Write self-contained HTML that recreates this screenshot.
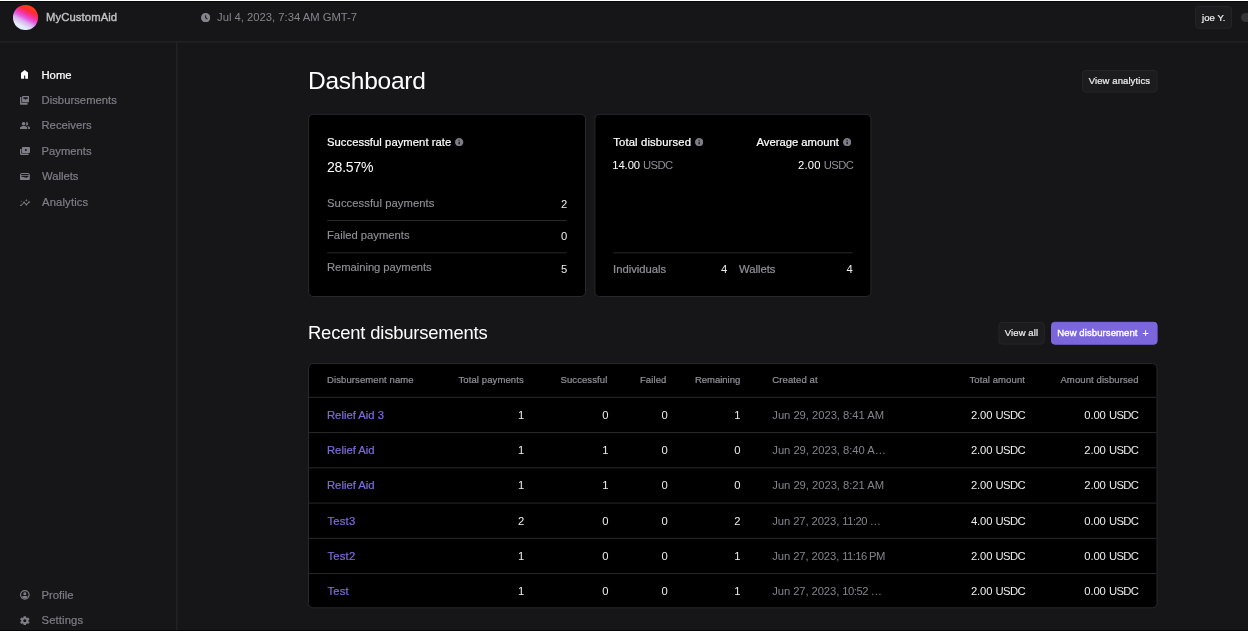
<!DOCTYPE html>
<html lang="en">
<head>
<meta charset="utf-8">
<title>Dashboard - Stellar Disbursement Platform</title>
<style>
*{box-sizing:border-box;margin:0;padding:0}
html,body{width:1248px;height:632px;overflow:hidden;background:#161618}
body{font-family:"Liberation Sans",Arial,sans-serif;color:#ededef;font-size:11.25px}
#app{position:absolute;left:0;top:0;width:1248px;height:632px;background:#161618;overflow:hidden;will-change:transform}
#topl{position:absolute;left:0;top:0;width:1248px;height:2px;background:linear-gradient(#fff 0,#fff 50%,#070709 50%,#070709 100%);z-index:5}
#botl{position:absolute;left:0;top:630px;width:1248px;height:2px;background:linear-gradient(#070709 0,#070709 50%,#fff 50%,#fff 100%);z-index:5}
.abs{position:absolute}
.t{position:absolute;white-space:nowrap;line-height:16px;height:16px}
.med{-webkit-text-stroke:0.22px currentColor}
.lt{-webkit-text-stroke:0.15px currentColor}
.semi{-webkit-text-stroke:0.38px currentColor}
.n{letter-spacing:-.1px}
.u{letter-spacing:-.6px}
.w{color:#fff}
.g9{color:#7e7d86}
.g9d{color:#84838b}
.g11{color:#908f97}
.lnk{color:#7e6add}
.line{position:absolute;background:#2a2a2e}
.ico{position:absolute}
.btn{position:absolute;border:1px solid #26262a;border-radius:3.5px;background:#1c1c1f}
.btn.pri{background:#7c66dc;border-color:#7c66dc}
.card{position:absolute;background:#000;border:1px solid #2a2a2e;border-radius:5px}
h1,h2{position:absolute;font-weight:400;color:#fff;white-space:nowrap;margin:0}
</style>
</head>
<body>
<div id="app">
<div id="topl"></div><div id="botl"></div>
<!-- header -->
<svg class="abs" style="left:0;top:0" width="1248" height="632" viewBox="0 0 1248 632" fill="none" stroke-width="1">
<path d="M0 41.9H1248" stroke="#29292d"/>
<path d="M176.8 42V632" stroke="#29292d"/>
<rect x="1195.6" y="6.5" width="36.0" height="21.8" rx="3.2" fill="#1c1c1f" stroke="#252529"/>
<rect x="1082.5" y="70.5" width="74.6" height="21.5" rx="3.2" fill="#1c1c1f" stroke="#252529"/>
<rect x="308.6" y="114.3" width="276.9" height="182.2" rx="4.6" fill="#000" stroke="#29292d"/>
<path d="M327.2 220.5H566.8" stroke="#29292d"/>
<path d="M327.2 252.8H566.8" stroke="#29292d"/>
<rect x="594.9" y="114.3" width="276.0" height="182.2" rx="4.6" fill="#000" stroke="#29292d"/>
<path d="M613.2 252.8H852.6" stroke="#29292d"/>
<rect x="998.9" y="322.5" width="45.4" height="21.6" rx="3.2" fill="#1c1c1f" stroke="#252529"/>
<rect x="1051.5" y="322.3" width="105.6" height="21.9" rx="3.2" fill="#7c66dc" stroke="#7c66dc"/>
<rect x="308.5" y="363.6" width="848.5" height="244.2" rx="4.6" fill="#000" stroke="#29292d"/>
<path d="M309 397.3H1156.5" stroke="#29292d"/>
<path d="M309 432.56H1156.5" stroke="#29292d"/>
<path d="M309 467.82H1156.5" stroke="#29292d"/>
<path d="M309 503.08H1156.5" stroke="#29292d"/>
<path d="M309 538.34H1156.5" stroke="#29292d"/>
<path d="M309 573.6H1156.5" stroke="#29292d"/>
</svg>
<div class="abs" style="left:13.1px;top:5.2px;width:24.5px;height:24.5px;border-radius:50%;background:linear-gradient(208deg,#ff4a00 10%,#ff2a38 28%,#f436a8 42%,#e45ae0 51%,#dcaef0 62%,#e4eef8 78%)"></div>
<div class="t semi" style="left:46px;top:9.1px;letter-spacing:0.11px;color:#c2c1c6">MyCustomAid</div>
<svg class="abs" style="left:201.2px;top:12.7px;width:9.300px;height:9.300px" viewBox="0 0 24 24"><circle cx="12" cy="12" r="12" fill="#85848c"/><path d="M12 5.500V12.500l4.500 3" stroke="#161618" stroke-width="2.600" fill="none"/></svg>
<div class="t " style="left:217px;top:9.1px;color:#85848c">Jul 4, 2023, 7:34 AM GMT-7</div>
<div class="t med" style="left:1202px;top:9.71px;font-size:9.5px;letter-spacing:0.1px;color:#ededef">joe Y.</div>
<div class="abs" style="left:1241px;top:13px;width:20px;height:9.200px;border-radius:5px;background:#333338"></div>
<!-- sidebar -->
<div class="t med w" style="left:41.5px;top:67.1px">Home</div>
<div class="t med g9" style="left:41.5px;top:92.1px;letter-spacing:0.03px">Disbursements</div>
<div class="t med g9" style="left:41.5px;top:117.1px">Receivers</div>
<div class="t med g9" style="left:41.5px;top:143.1px">Payments</div>
<div class="t med g9" style="left:42px;top:168.1px">Wallets</div>
<div class="t med g9" style="left:42px;top:194.1px;letter-spacing:0.15px">Analytics</div>
<div class="t med g9" style="left:41.5px;top:587.1px">Profile</div>
<div class="t med g9" style="left:41.5px;top:612.1px;letter-spacing:0.13px">Settings</div>
<svg class="ico" style="left:20.8px;top:70.2px;width:7.4px;height:8.7px" viewBox="0 0 74 87" preserveAspectRatio="none" fill="#fff"><path d="M37 0L72 26.500Q74 28 74 31V83Q74 87 70 87H42.500V55H31.500V87H4Q0 87 0 83V31Q0 28 2 26.500Z"/></svg>
<svg class="ico" style="left:19.85px;top:95.85px;width:9.65px;height:8.85px" viewBox="0 0 9.65 8.85" preserveAspectRatio="none" fill="#7e7d86"><path fill-rule="evenodd" d="M2.850 0H8.850Q9.650 0 9.650 .8V5.550Q9.650 6.350 8.850 6.350H2.850Q2.050 6.350 2.050 5.550V.8Q2.050 0 2.850 0ZM3.350 1.250H7.750V2.650H6.800L5.550 3.800L4.300 2.650H3.350Z"/><path d="M0 .95H1.400V6.850H7.600V8.850H1.200Q0 8.850 0 7.650Z"/></svg>
<svg class="ico" style="left:19.85px;top:121.8px;width:9.95px;height:7.1px" viewBox="1 4 22 16" preserveAspectRatio="none" fill="#7e7d86"><path d="M16.670 13.130C18.040 14.060 19 15.320 19 17v3h4v-3c0-2.180-3.570-3.470-6.330-3.870z"/><circle cx="9" cy="8" r="4"/><path d="M9 13c-2.670 0-8 1.340-8 4v3h16v-3c0-2.660-5.330-4-8-4zm6-1c2.210 0 4-1.790 4-4s-1.790-4-4-4c-.47 0-.91.100-1.330.24a5.980 5.980 0 0 1 0 7.520c.42.140.86.24 1.330.24z"/></svg>
<svg class="ico" style="left:19.7px;top:146.8px;width:10.1px;height:7.9px" viewBox="0 0 10.1 7.9" preserveAspectRatio="none" fill="#7e7d86"><path fill-rule="evenodd" d="M2.800 0H9.200Q10.100 0 10.100 .9V5Q10.100 5.900 9.200 5.900H2.800Q1.900 5.900 1.900 5V.9Q1.900 0 2.800 0ZM5.850 2.100A1 1 0 1 0 5.850 4.100A1 1 0 1 0 5.850 2.100Z"/><path d="M0 1.900H1.350V6.450H8.600V7.900H1.100Q0 7.900 0 6.800Z"/></svg>
<svg class="ico" style="left:20px;top:172.6px;width:9.8px;height:7.65px" viewBox="2 4 20 16" preserveAspectRatio="none" fill="#7e7d86"><path d="M18 4H6C3.790 4 2 5.790 2 8v8c0 2.210 1.790 4 4 4h12c2.210 0 4-1.790 4-4V8c0-2.210-1.790-4-4-4zm-1.860 9.770c-.24.2-.57.28-.88.2L4.150 11.250C4.450 10.520 5.160 10 6 10h12c.67 0 1.260.34 1.630.84l-3.490 2.930zM20 8.550c-.59-.34-1.270-.55-2-.55H6c-.73 0-1.410.21-2 .55V8c0-1.100.9-2 2-2h12c1.100 0 2 .9 2 2v.55z"/></svg>
<svg class="ico" style="left:19.75px;top:198.5px;width:10px;height:7.4px" viewBox="1 3 22 17" preserveAspectRatio="none" fill="#7e7d86"><path d="M21 8c-1.450 0-2.260 1.440-1.930 2.510l-3.550 3.560c-.3-.09-.74-.09-1.040 0l-2.550-2.550C12.270 10.450 11.460 9 10 9c-1.450 0-2.270 1.440-1.930 2.520l-4.560 4.550C2.440 15.740 1 16.550 1 18c0 1.100.9 2 2 2 1.450 0 2.260-1.440 1.930-2.510l4.550-4.560c.3.090.74.090 1.040 0l2.550 2.550C12.730 16.550 13.540 18 15 18c1.450 0 2.270-1.440 1.930-2.520l3.560-3.550c1.070.33 2.510-.48 2.510-1.930 0-1.100-.9-2-2-2z"/><path d="M15 9l.94-2.070L18 6l-2.060-.93L15 3l-.92 2.070L12 6l2.080.93z"/><path d="M3.500 11L4 9l2-.5L4 8l-.5-2L3 8l-2 .5L3 9z"/></svg>
<svg class="ico" style="left:19.95px;top:589.9px;width:9.7px;height:9.7px" viewBox="0 0 97 97" preserveAspectRatio="none" fill="#7e7d86"><circle cx="48.500" cy="48.500" r="42.500" fill="none" stroke="#7e7d86" stroke-width="12"/><circle cx="48.500" cy="37" r="15"/><path d="M17 70C25 58 72 58 80 70A42 42 0 0 1 17 70Z"/></svg>
<svg class="ico" style="left:20px;top:615.9px;width:9.6px;height:9.4px" viewBox="2.500 2 19 20" preserveAspectRatio="none" fill="#7e7d86"><path d="M19.140 12.940c.040-.3.060-.61.060-.940 0-.32-.020-.64-.070-.940l2.030-1.580c.18-.14.23-.41.12-.61l-1.920-3.320c-.12-.22-.37-.29-.59-.22l-2.390.96c-.5-.38-1.030-.7-1.620-.940l-.36-2.540c-.040-.24-.24-.41-.48-.41h-3.840c-.24 0-.43.17-.47.41l-.36 2.540c-.59.240-1.130.57-1.620.940l-2.390-.96c-.22-.080-.47 0-.59.220L2.740 8.870c-.12.210-.080.470.12.610l2.030 1.580c-.050.3-.090.630-.090.940s.020.640.070.940l-2.030 1.580c-.18.140-.23.410-.12.610l1.920 3.320c.12.220.37.290.59.220l2.390-.96c.5.380 1.030.7 1.620.940l.36 2.540c.050.240.24.410.48.410h3.840c.24 0 .44-.17.470-.41l.36-2.540c.59-.24 1.130-.56 1.620-.940l2.390.96c.22.080.47 0 .59-.22l1.920-3.320c.12-.22.070-.47-.12-.61l-2.010-1.580zM12 15c-1.650 0-3-1.350-3-3s1.350-3 3-3 3 1.350 3 3-1.350 3-3 3z"/></svg>
<!-- main -->
<div class="t w" style="left:308px;top:72.91px;font-size:24.5px;letter-spacing:-0.25px">Dashboard</div>
<div class="t med" style="left:1088.7px;top:72.71px;font-size:9.5px;letter-spacing:0.1px">View analytics</div>
<div class="t med w" style="left:327px;top:134.1px;letter-spacing:0.05px">Successful payment rate</div>
<svg class="ico" style="left:455.35px;top:138.15px;width:8.3px;height:8.3px" viewBox="2 2 20 20" fill="#7e7d86"><path d="M12 2C6.480 2 2 6.480 2 12s4.480 10 10 10 10-4.480 10-10S17.520 2 12 2zm1.300 15h-2.600v-6.200h2.600V17zm0-8.200h-2.600V6.400h2.600v2.400z"/></svg>
<div class="t w" style="left:327px;top:159.15px;font-size:14px;letter-spacing:-0.2px">28.57%</div>
<div class="t g11 lt" style="left:327px;top:195.1px;letter-spacing:0.06px">Successful payments</div>
<div class="t " style="right:680.8px;top:196.1px">2</div>
<div class="t g11 lt" style="left:327px;top:227.1px">Failed payments</div>
<div class="t " style="right:680.8px;top:228.1px">0</div>
<div class="t g11 lt" style="left:327px;top:259.4px;letter-spacing:-0.055px">Remaining payments</div>
<div class="t " style="right:680.8px;top:260.5px">5</div>
<div class="t med w" style="left:613.3px;top:134.1px;letter-spacing:0.14px">Total disbursed</div>
<svg class="ico" style="left:694.6px;top:137.95px;width:8.3px;height:8.3px" viewBox="2 2 20 20" fill="#7e7d86"><path d="M12 2C6.480 2 2 6.480 2 12s4.480 10 10 10 10-4.480 10-10S17.520 2 12 2zm1.300 15h-2.600v-6.200h2.600V17zm0-8.200h-2.600V6.400h2.600v2.400z"/></svg>
<div class="t med w" style="left:756.5px;top:134.1px">Average amount</div>
<svg class="ico" style="left:842.55px;top:137.95px;width:8.3px;height:8.3px" viewBox="2 2 20 20" fill="#7e7d86"><path d="M12 2C6.480 2 2 6.480 2 12s4.480 10 10 10 10-4.480 10-10S17.520 2 12 2zm1.300 15h-2.600v-6.200h2.600V17zm0-8.200h-2.600V6.400h2.600v2.400z"/></svg>
<div class="t w" style="left:612.3px;top:157.1px"><span class="n">14.00</span> <span class="g11 u">USDC</span></div>
<div class="t w" style="right:394.7px;top:157.1px"><span style="letter-spacing:.2px">2.00</span> <span class="g11 u">USDC</span></div>
<div class="t g11 med" style="left:613px;top:260.8px">Individuals</div>
<div class="t " style="right:520.7px;top:261.0px">4</div>
<div class="t g11 med" style="left:739px;top:260.8px">Wallets</div>
<div class="t " style="right:395.2px;top:261.0px">4</div>
<div class="t w" style="left:308px;top:325.42px;font-size:18.4px;letter-spacing:-0.17px">Recent disbursements</div>
<div class="t med" style="left:1004.8px;top:324.71px;font-size:9.5px;letter-spacing:0.1px">View all</div>
<div class="t semi w" style="left:1057.3px;top:324.71px;font-size:9.5px;letter-spacing:0.1px">New disbursement</div>
<div class="t w med" style="left:1142.6px;top:324.66px;font-size:10.5px">+</div>
<div class="t g11 med" style="left:327px;top:372.41px;font-size:9.5px;letter-spacing:0.1px">Disbursement name</div>
<div class="t g11 med" style="right:724.2px;top:372.41px;font-size:9.5px;letter-spacing:0.1px">Total payments</div>
<div class="t g11 med" style="right:640.6px;top:372.41px;font-size:9.5px;letter-spacing:0.1px">Successful</div>
<div class="t g11 med" style="right:581.6px;top:372.41px;font-size:9.5px;letter-spacing:0.1px">Failed</div>
<div class="t g11 med" style="right:507.8px;top:372.41px;font-size:9.5px;letter-spacing:-0.02px">Remaining</div>
<div class="t g11 med" style="left:772.3px;top:372.41px;font-size:9.5px;letter-spacing:0.1px">Created at</div>
<div class="t g11 med" style="right:223px;top:372.41px;font-size:9.5px;letter-spacing:0.1px">Total amount</div>
<div class="t g11 med" style="right:109.4px;top:372.41px;font-size:9.5px;letter-spacing:0.1px">Amount disbursed</div>
<div class="t lnk med" style="left:327px;top:407.1px">Relief Aid 3</div>
<div class="t " style="right:723.8px;top:407.1px">1</div>
<div class="t " style="right:639.5px;top:407.1px">0</div>
<div class="t " style="right:580.3px;top:407.1px">0</div>
<div class="t " style="right:507.4px;top:407.1px">1</div>
<div class="t g9d" style="left:772.3px;top:407.1px;letter-spacing:-0.04px">Jun 29, 2023, 8:41 AM</div>
<div class="t " style="right:223.0px;top:407.1px"><span class="n">2.00</span> <span class="u">USDC</span></div>
<div class="t " style="right:109.6px;top:407.1px"><span class="n">0.00</span> <span class="u">USDC</span></div>
<div class="t lnk med" style="left:327px;top:442.28px">Relief Aid</div>
<div class="t " style="right:723.8px;top:442.28px">1</div>
<div class="t " style="right:639.5px;top:442.28px">1</div>
<div class="t " style="right:580.3px;top:442.28px">0</div>
<div class="t " style="right:507.4px;top:442.28px">0</div>
<div class="t g9d" style="left:772.3px;top:442.28px;letter-spacing:-0.04px">Jun 29, 2023, 8:40 A…</div>
<div class="t " style="right:223.0px;top:442.28px"><span class="n">2.00</span> <span class="u">USDC</span></div>
<div class="t " style="right:109.6px;top:442.28px"><span class="n">2.00</span> <span class="u">USDC</span></div>
<div class="t lnk med" style="left:327px;top:477.46px">Relief Aid</div>
<div class="t " style="right:723.8px;top:477.46px">1</div>
<div class="t " style="right:639.5px;top:477.46px">1</div>
<div class="t " style="right:580.3px;top:477.46px">0</div>
<div class="t " style="right:507.4px;top:477.46px">0</div>
<div class="t g9d" style="left:772.3px;top:477.46px;letter-spacing:-0.04px">Jun 29, 2023, 8:21 AM</div>
<div class="t " style="right:223.0px;top:477.46px"><span class="n">2.00</span> <span class="u">USDC</span></div>
<div class="t " style="right:109.6px;top:477.46px"><span class="n">2.00</span> <span class="u">USDC</span></div>
<div class="t lnk med" style="left:327.5px;top:512.64px;letter-spacing:0.2px">Test3</div>
<div class="t " style="right:723.8px;top:512.64px">2</div>
<div class="t " style="right:639.5px;top:512.64px">0</div>
<div class="t " style="right:580.3px;top:512.64px">0</div>
<div class="t " style="right:507.4px;top:512.64px">2</div>
<div class="t g9d" style="left:772.3px;top:512.64px"><span style="letter-spacing:-.1px">Jun 27, 2023, </span><span style="letter-spacing:-0.5px">11:20 …</span></div>
<div class="t " style="right:223.0px;top:512.64px"><span class="n">4.00</span> <span class="u">USDC</span></div>
<div class="t " style="right:109.6px;top:512.64px"><span class="n">0.00</span> <span class="u">USDC</span></div>
<div class="t lnk med" style="left:327.5px;top:547.82px;letter-spacing:0.2px">Test2</div>
<div class="t " style="right:723.8px;top:547.82px">1</div>
<div class="t " style="right:639.5px;top:547.82px">0</div>
<div class="t " style="right:580.3px;top:547.82px">0</div>
<div class="t " style="right:507.4px;top:547.82px">1</div>
<div class="t g9d" style="left:772.3px;top:547.82px"><span style="letter-spacing:-.1px">Jun 27, 2023, </span><span style="letter-spacing:-0.6px">11:16 PM</span></div>
<div class="t " style="right:223.0px;top:547.82px"><span class="n">2.00</span> <span class="u">USDC</span></div>
<div class="t " style="right:109.6px;top:547.82px"><span class="n">0.00</span> <span class="u">USDC</span></div>
<div class="t lnk med" style="left:327.5px;top:583.0px;letter-spacing:0.2px">Test</div>
<div class="t " style="right:723.8px;top:583.0px">1</div>
<div class="t " style="right:639.5px;top:583.0px">0</div>
<div class="t " style="right:580.3px;top:583.0px">0</div>
<div class="t " style="right:507.4px;top:583.0px">1</div>
<div class="t g9d" style="left:772.3px;top:583.0px"><span style="letter-spacing:-.1px">Jun 27, 2023, </span><span style="letter-spacing:-0.45px">10:52 …</span></div>
<div class="t " style="right:223.0px;top:583.0px"><span class="n">2.00</span> <span class="u">USDC</span></div>
<div class="t " style="right:109.6px;top:583.0px"><span class="n">0.00</span> <span class="u">USDC</span></div>
</div>
</body>
</html>
